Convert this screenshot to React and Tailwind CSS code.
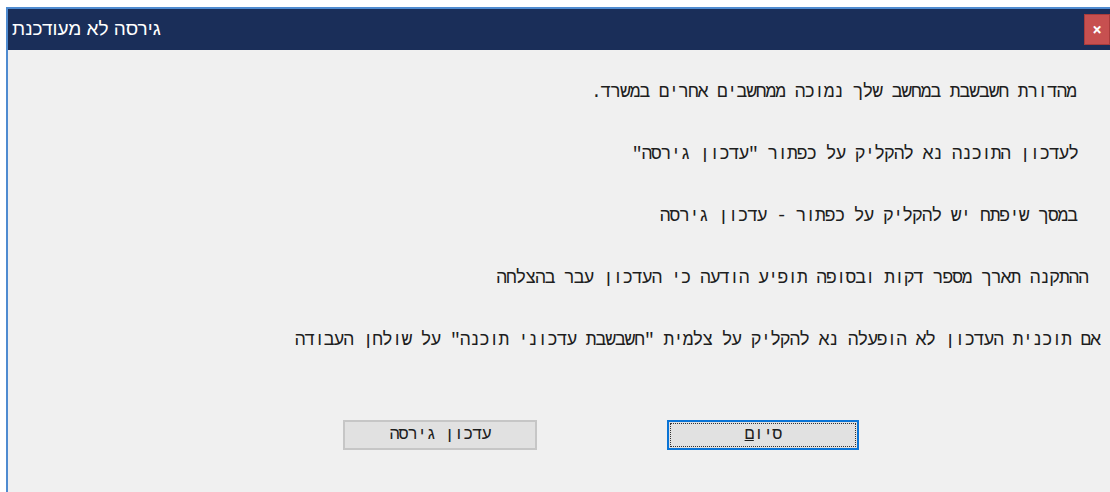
const lines = [
  { text: "מהדורת חשבשבת במחשב שלך נמוכה ממחשבים אחרים במשרד.", pad: "pr-[34px]" },
  { text: "לעדכון התוכנה נא להקליק על כפתור \"עדכון גירסה\"", pad: "pr-[32px]" },
  { text: "במסך שיפתח יש להקליק על כפתור - עדכון גירסה", pad: "pr-[33px]" },
  { text: "ההתקנה תארך מספר דקות ובסופה תופיע הודעה כי העדכון עבר בהצלחה", pad: "pr-[22px]" },
  { text: "אם תוכנית העדכון לא הופעלה נא להקליק על צלמית \"חשבשבת עדכוני תוכנה\" על שולחן העבודה", pad: "pr-[10px]" },
];

const mono = { fontFamily: '"Liberation Mono", "DejaVu Sans Mono", monospace' };

export default function App() {
  return (
    <div className="h-[492px] w-[1110px] overflow-hidden bg-white pl-[6px] pt-[7px]">
      <div className="flex h-[520px] flex-col border-l-2 border-t-2 border-[#4f8bd0] bg-[#f0f0f0]">
        <div className="flex h-[41px] items-center justify-between bg-[#1a2e59] pl-[4px]">
          <span
            dir="rtl"
            className="text-[19px] text-white"
            style={{ fontFamily: '"Liberation Sans", "DejaVu Sans", sans-serif' }}
          >
            גירסה לא מעודכנת
          </span>
          <button className="flex h-[31px] w-[26px] items-center justify-center border border-[#a83c3c] bg-[#c75050] text-[17px] font-bold leading-none text-white">
            ×
          </button>
        </div>

        <div
          dir="rtl"
          className="flex flex-col gap-[40px] pt-[31px] text-[18px] leading-[22px] tracking-[-1.1px] text-[#1e1e1e]"
          style={mono}
        >
          {lines.map((line) => (
            <p key={line.text} className={line.pad}>
              {line.text}
            </p>
          ))}
        </div>

        <div className="mt-[69px] flex items-center pl-[335px] tracking-[-1px]" style={mono}>
          <button className="h-[30px] w-[194px] border-2 border-[#c6c6c6] bg-[#e1e1e1] text-[17px] text-[#1e1e1e]">
            <span dir="rtl">עדכון גירסה</span>
          </button>
          <button className="ml-[130px] h-[30px] w-[192px] border-2 border-[#0a74d6] bg-[#e1e1e1] p-[1px] text-[17px] text-[#1e1e1e]">
            <span className="flex h-full w-full items-center justify-center border border-dotted border-[#333]">
              <span dir="rtl">
                סיו<span className="underline">ם</span>
              </span>
            </span>
          </button>
        </div>
      </div>
    </div>
  );
}
